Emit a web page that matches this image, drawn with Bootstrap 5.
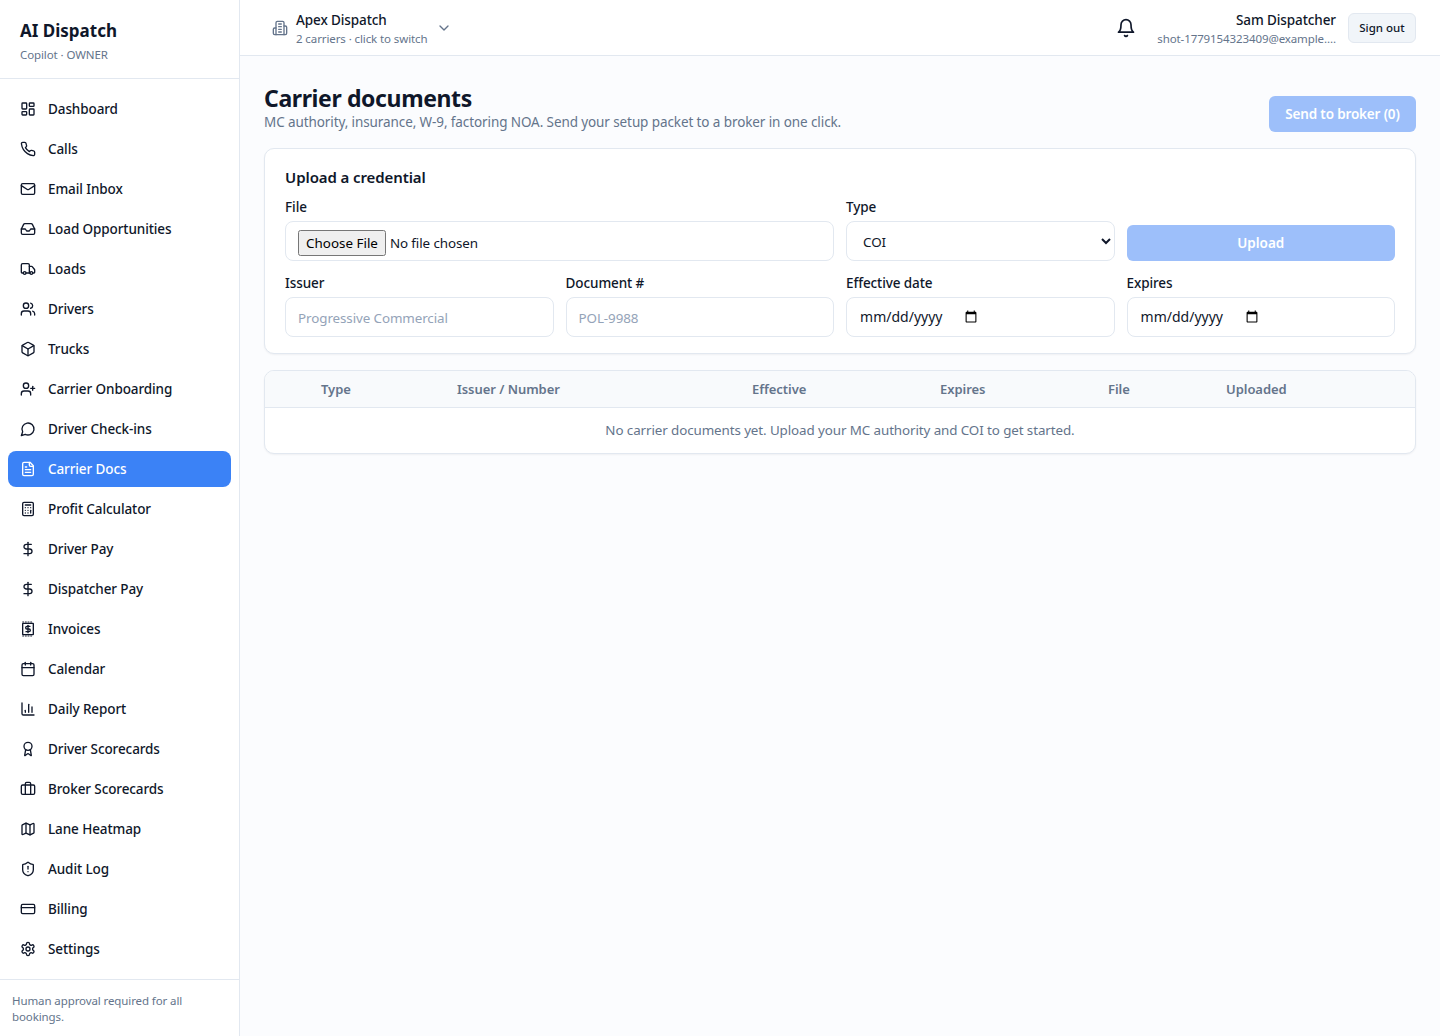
<!doctype html>
<html lang="en"><head><meta charset="utf-8"><title>Carrier documents</title>
<link href="https://cdn.jsdelivr.net/npm/bootstrap@5.3.0/dist/css/bootstrap.min.css" rel="stylesheet">
<style>
body{font-family:"Noto Sans",sans-serif;background:#fbfcfe;color:#0f172a;font-size:13.5px;letter-spacing:-.1px;height:1036px;overflow:hidden}
.app-side{width:240px;height:1036px;background:#fff;border-right:1px solid #e2e8f0;flex:none}
.side-head{height:79px;padding:19px 20px 0;border-bottom:1px solid #e2e8f0;flex:none}
.side-title{font-size:17px;font-weight:700;line-height:24px;letter-spacing:0}
.side-sub{font-size:11.5px;line-height:20px;color:#64748b;margin-top:2px}
.side-nav{padding:12px 8px 0;flex:1 1 auto}
.nav-row{height:36px;margin-bottom:4px;padding:0 12px;border-radius:8px;color:#0f172a;font-size:13.5px;font-weight:500;text-decoration:none;gap:12px}
.nav-row svg,.top-ic{width:16px;height:16px;fill:none;stroke:currentColor;stroke-width:2;stroke-linecap:round;stroke-linejoin:round;flex:none}
.nav-row.on{background:#3b82f6;color:#fff}
.side-foot{border-top:1px solid #e2e8f0;padding:13px 12px 0;height:57px;font-size:11.5px;line-height:16px;color:#64748b;flex:none}
.top-bar{height:56px;background:#fff;border-bottom:1px solid #e2e8f0;padding:0 24px 0 32px}
.org-block{padding-top:2px}
.org-name{font-size:13.5px;font-weight:500;line-height:20px}
.org-sub{font-size:11.5px;line-height:16px;color:#64748b;margin-top:1px}
.top-ic.bell{width:20px;height:20px;margin-right:21px}
.grey-ic{color:#64748b}
.btn-out{font-size:11.5px;font-weight:500;background:#f1f5f9;border:1px solid #e2e8f0;border-radius:6px;padding:0 10px;height:30px;width:68px;color:#0f172a;margin-left:12px}
.main-pad{padding:28px 24px}
.pg-title{font-size:23px;font-weight:700;line-height:28px;margin:0;letter-spacing:-.38px}
.pg-sub{font-size:13.5px;line-height:20px;color:#64748b;margin:0}
.btn-blue{background:#9dbffa;color:#fff;border:0;border-radius:6px;font-size:13.5px;font-weight:600;height:36px}
.btn-send{width:147px;letter-spacing:-.16px;padding:0}
.panel-box{background:#fff;border:1px solid #e2e8f0;border-radius:10px;box-shadow:0 1px 2px rgba(15,23,42,.05)}
.pad-form{padding:16px 19.9px 16px 20.1px}
.panel-h{font-size:15px;font-weight:600;line-height:24px;margin:0 0 8px}
.fld-lbl{font-size:13.5px;font-weight:500;line-height:20px;margin:0 0 4px;display:block}
.fld{height:40px;border:1px solid #e2e8f0;border-radius:8px;background:#fff;font-size:13.4px;color:#0f172a;padding:1px 12px 0;width:100%;font-family:inherit;letter-spacing:-.1px}
.fld::placeholder{color:#94a3b8}
.fld-file{padding:8px 12px 4px;line-height:26px}
.fld-file::file-selector-button{height:26px;line-height:22px;padding:0 6px;margin-right:4px}
.fld[type=date]{font-size:14px;letter-spacing:0;padding:0 12px 1px 13px}
.fld[type=date]::-webkit-datetime-edit{flex:none;margin-right:-6px}
.fld[type=date]::-webkit-calendar-picker-indicator{margin-left:0}
.form-grid{display:grid;grid-template-columns:repeat(4,1fr);gap:12px}
.span-two{grid-column:span 2}
.doc-table{width:100%;table-layout:fixed;border-collapse:separate;border-spacing:0;margin:0}
.doc-table th{background:#f8fafc;border-bottom:1px solid #e2e8f0;height:37px;font-weight:600;color:#64748b;font-size:13px;letter-spacing:-.05px;padding:1px 16px 0}
.doc-table th:first-child{border-top-left-radius:9px}
.doc-table th:last-child{border-top-right-radius:9px}
.doc-table td{height:45px;color:#64748b;font-size:13.4px;text-align:center;padding:0}
.c0{width:40px}.c1{width:136px}.c2{width:295px}.c3{width:188px}.c4{width:168px}.c5{width:118px}
</style></head>
<body>
<svg class="d-none"><defs>
<symbol id="i-dash" viewBox="0 0 24 24"><rect x="3" y="3" width="7" height="9" rx="1"/><rect x="14" y="3" width="7" height="5" rx="1"/><rect x="14" y="12" width="7" height="9" rx="1"/><rect x="3" y="16" width="7" height="5" rx="1"/></symbol>
<symbol id="i-phone" viewBox="0 0 24 24"><path d="M22 16.92v3a2 2 0 0 1-2.18 2 19.79 19.79 0 0 1-8.63-3.07 19.5 19.5 0 0 1-6-6 19.79 19.79 0 0 1-3.07-8.67A2 2 0 0 1 4.11 2h3a2 2 0 0 1 2 1.72 12.84 12.84 0 0 0 .7 2.81 2 2 0 0 1-.45 2.11L8.09 9.91a16 16 0 0 0 6 6l1.27-1.27a2 2 0 0 1 2.11-.45 12.84 12.84 0 0 0 2.81.7A2 2 0 0 1 22 16.92z"/></symbol>
<symbol id="i-mail" viewBox="0 0 24 24"><rect width="20" height="16" x="2" y="4" rx="2"/><path d="m22 7-8.97 5.7a1.94 1.94 0 0 1-2.06 0L2 7"/></symbol>
<symbol id="i-inbox" viewBox="0 0 24 24"><polyline points="22 12 16 12 14 15 10 15 8 12 2 12"/><path d="M5.45 5.11 2 12v6a2 2 0 0 0 2 2h16a2 2 0 0 0 2-2v-6l-3.45-6.89A2 2 0 0 0 16.76 4H7.24a2 2 0 0 0-1.79 1.11z"/></symbol>
<symbol id="i-truck" viewBox="0 0 24 24"><path d="M14 18V6a2 2 0 0 0-2-2H4a2 2 0 0 0-2 2v11a1 1 0 0 0 1 1h2"/><path d="M15 18H9"/><path d="M19 18h2a1 1 0 0 0 1-1v-3.65a1 1 0 0 0-.22-.624l-3.48-4.35A1 1 0 0 0 17.52 8H14"/><circle cx="17" cy="18" r="2"/><circle cx="7" cy="18" r="2"/></symbol>
<symbol id="i-users" viewBox="0 0 24 24"><path d="M16 21v-2a4 4 0 0 0-4-4H6a4 4 0 0 0-4 4v2"/><circle cx="9" cy="7" r="4"/><path d="M22 21v-2a4 4 0 0 0-3-3.87"/><path d="M16 3.13a4 4 0 0 1 0 7.75"/></symbol>
<symbol id="i-box" viewBox="0 0 24 24"><path d="M21 8a2 2 0 0 0-1-1.73l-7-4a2 2 0 0 0-2 0l-7 4A2 2 0 0 0 3 8v8a2 2 0 0 0 1 1.73l7 4a2 2 0 0 0 2 0l7-4A2 2 0 0 0 21 16Z"/><path d="m3.3 7 8.7 5 8.7-5"/><path d="M12 22V12"/></symbol>
<symbol id="i-uplus" viewBox="0 0 24 24"><path d="M16 21v-2a4 4 0 0 0-4-4H6a4 4 0 0 0-4 4v2"/><circle cx="9" cy="7" r="4"/><line x1="19" x2="19" y1="8" y2="14"/><line x1="22" x2="16" y1="11" y2="11"/></symbol>
<symbol id="i-msg" viewBox="0 0 24 24"><path d="M7.9 20A9 9 0 1 0 4 16.1L2 22Z"/></symbol>
<symbol id="i-file" viewBox="0 0 24 24"><path d="M15 2H6a2 2 0 0 0-2 2v16a2 2 0 0 0 2 2h12a2 2 0 0 0 2-2V7Z"/><path d="M14 2v4a2 2 0 0 0 2 2h4"/><path d="M10 9H8"/><path d="M16 13H8"/><path d="M16 17H8"/></symbol>
<symbol id="i-calc" viewBox="0 0 24 24"><rect width="16" height="20" x="4" y="2" rx="2"/><line x1="8" x2="16" y1="6" y2="6"/><line x1="16" x2="16" y1="14" y2="18"/><path d="M16 10h.01"/><path d="M12 10h.01"/><path d="M8 10h.01"/><path d="M12 14h.01"/><path d="M8 14h.01"/><path d="M12 18h.01"/><path d="M8 18h.01"/></symbol>
<symbol id="i-dollar" viewBox="0 0 24 24"><line x1="12" x2="12" y1="2" y2="22"/><path d="M17 5H9.5a3.5 3.5 0 0 0 0 7h5a3.5 3.5 0 0 1 0 7H6"/></symbol>
<symbol id="i-inv" viewBox="0 0 24 24"><rect x="4" y="3.5" width="16" height="17" rx=".5"/><path d="M4 1.5h16M4 22.5h16" stroke-dasharray="1.5 2.5" stroke-width="1.4"/><path d="M15 8h-4.5a2 2 0 0 0 0 4h3a2 2 0 0 1 0 4H9"/><path d="M12 6.5v11"/></symbol>
<symbol id="i-cal" viewBox="0 0 24 24"><path d="M8 2v4"/><path d="M16 2v4"/><rect width="18" height="18" x="3" y="4" rx="2"/><path d="M3 10h18"/></symbol>
<symbol id="i-chart" viewBox="0 0 24 24"><path d="M3 3v16a2 2 0 0 0 2 2h16"/><path d="M18 17V9"/><path d="M13 17V5"/><path d="M8 17v-3"/></symbol>
<symbol id="i-award" viewBox="0 0 24 24"><path d="m15.477 12.89 1.515 8.526a.5.5 0 0 1-.81.47l-3.58-2.687a1 1 0 0 0-1.197 0l-3.586 2.686a.5.5 0 0 1-.81-.469l1.514-8.526"/><circle cx="12" cy="8" r="6"/></symbol>
<symbol id="i-brief" viewBox="0 0 24 24"><path d="M16 20V4a2 2 0 0 0-2-2h-4a2 2 0 0 0-2 2v16"/><rect width="20" height="14" x="2" y="6" rx="2"/></symbol>
<symbol id="i-map" viewBox="0 0 24 24"><path d="M14.106 5.553a2 2 0 0 0 1.788 0l3.659-1.83A1 1 0 0 1 21 4.619v12.764a1 1 0 0 1-.553.894l-4.553 2.277a2 2 0 0 1-1.788 0l-4.212-2.106a2 2 0 0 0-1.788 0l-3.659 1.83A1 1 0 0 1 3 19.381V6.618a1 1 0 0 1 .553-.894l4.553-2.277a2 2 0 0 1 1.788 0z"/><path d="M15 5.764v15"/><path d="M9 3.236v15"/></symbol>
<symbol id="i-shield" viewBox="0 0 24 24"><path d="M20 13c0 5-3.5 7.5-7.66 8.95a1 1 0 0 1-.67-.01C7.5 20.5 4 18 4 13V6a1 1 0 0 1 1-1c2 0 4.5-1.2 6.24-2.72a1.17 1.17 0 0 1 1.52 0C14.51 3.81 17 5 19 5a1 1 0 0 1 1 1z"/><path d="M12 8v4"/><path d="M12 16h.01"/></symbol>
<symbol id="i-card" viewBox="0 0 24 24"><rect width="20" height="14" x="2" y="5" rx="2"/><line x1="2" x2="22" y1="10" y2="10"/></symbol>
<symbol id="i-gear" viewBox="0 0 24 24"><path d="M12.22 2h-.44a2 2 0 0 0-2 2v.18a2 2 0 0 1-1 1.73l-.43.25a2 2 0 0 1-2 0l-.15-.08a2 2 0 0 0-2.73.73l-.22.38a2 2 0 0 0 .73 2.73l.15.1a2 2 0 0 1 1 1.72v.51a2 2 0 0 1-1 1.74l-.15.09a2 2 0 0 0-.73 2.73l.22.38a2 2 0 0 0 2.73.73l.15-.08a2 2 0 0 1 2 0l.43.25a2 2 0 0 1 1 1.73V20a2 2 0 0 0 2 2h.44a2 2 0 0 0 2-2v-.18a2 2 0 0 1 1-1.73l.43-.25a2 2 0 0 1 2 0l.15.08a2 2 0 0 0 2.73-.73l.22-.39a2 2 0 0 0-.73-2.73l-.15-.08a2 2 0 0 1-1-1.74v-.5a2 2 0 0 1 1-1.74l.15-.09a2 2 0 0 0 .73-2.73l-.22-.38a2 2 0 0 0-2.73-.73l-.15.08a2 2 0 0 1-2 0l-.43-.25a2 2 0 0 1-1-1.73V4a2 2 0 0 0-2-2z"/><circle cx="12" cy="12" r="3"/></symbol>
</defs></svg>
<div class="d-flex">
<aside class="app-side d-flex flex-column">
<div class="side-head"><div class="side-title">AI Dispatch</div><div class="side-sub">Copilot · OWNER</div></div>
<nav class="side-nav">
<a class="nav-row d-flex align-items-center" href="#"><svg><use href="#i-dash"/></svg>Dashboard</a>
<a class="nav-row d-flex align-items-center" href="#"><svg><use href="#i-phone"/></svg>Calls</a>
<a class="nav-row d-flex align-items-center" href="#"><svg><use href="#i-mail"/></svg>Email Inbox</a>
<a class="nav-row d-flex align-items-center" href="#"><svg><use href="#i-inbox"/></svg>Load Opportunities</a>
<a class="nav-row d-flex align-items-center" href="#"><svg><use href="#i-truck"/></svg>Loads</a>
<a class="nav-row d-flex align-items-center" href="#"><svg><use href="#i-users"/></svg>Drivers</a>
<a class="nav-row d-flex align-items-center" href="#"><svg><use href="#i-box"/></svg>Trucks</a>
<a class="nav-row d-flex align-items-center" href="#"><svg><use href="#i-uplus"/></svg>Carrier Onboarding</a>
<a class="nav-row d-flex align-items-center" href="#"><svg><use href="#i-msg"/></svg>Driver Check-ins</a>
<a class="nav-row on d-flex align-items-center" href="#"><svg><use href="#i-file"/></svg>Carrier Docs</a>
<a class="nav-row d-flex align-items-center" href="#"><svg><use href="#i-calc"/></svg>Profit Calculator</a>
<a class="nav-row d-flex align-items-center" href="#"><svg><use href="#i-dollar"/></svg>Driver Pay</a>
<a class="nav-row d-flex align-items-center" href="#"><svg><use href="#i-dollar"/></svg>Dispatcher Pay</a>
<a class="nav-row d-flex align-items-center" href="#"><svg><use href="#i-inv"/></svg>Invoices</a>
<a class="nav-row d-flex align-items-center" href="#"><svg><use href="#i-cal"/></svg>Calendar</a>
<a class="nav-row d-flex align-items-center" href="#"><svg><use href="#i-chart"/></svg>Daily Report</a>
<a class="nav-row d-flex align-items-center" href="#"><svg><use href="#i-award"/></svg>Driver Scorecards</a>
<a class="nav-row d-flex align-items-center" href="#"><svg><use href="#i-brief"/></svg>Broker Scorecards</a>
<a class="nav-row d-flex align-items-center" href="#"><svg><use href="#i-map"/></svg>Lane Heatmap</a>
<a class="nav-row d-flex align-items-center" href="#"><svg><use href="#i-shield"/></svg>Audit Log</a>
<a class="nav-row d-flex align-items-center" href="#"><svg><use href="#i-card"/></svg>Billing</a>
<a class="nav-row d-flex align-items-center" href="#"><svg><use href="#i-gear"/></svg>Settings</a>
</nav>
<div class="side-foot">Human approval required for all bookings.</div>
</aside>
<div class="flex-grow-1">
<header class="top-bar d-flex align-items-center justify-content-between">
<div class="d-flex align-items-center">
<svg class="top-ic grey-ic me-2" viewBox="0 0 24 24"><path d="M6 22V4a2 2 0 0 1 2-2h8a2 2 0 0 1 2 2v18Z"/><path d="M6 12H4a2 2 0 0 0-2 2v6a2 2 0 0 0 2 2h2"/><path d="M18 9h2a2 2 0 0 1 2 2v9a2 2 0 0 1-2 2h-2"/><path d="M10 6h4"/><path d="M10 10h4"/><path d="M10 14h4"/><path d="M10 18h4"/></svg>
<div class="org-block"><div class="org-name">Apex Dispatch</div><div class="org-sub">2 carriers · click to switch</div></div>
<svg class="top-ic grey-ic ms-2" viewBox="0 0 24 24"><path d="m6 9 6 6 6-6"/></svg>
</div>
<div class="d-flex align-items-center">
<svg class="top-ic bell" viewBox="0 0 24 24"><path d="M6 8a6 6 0 0 1 12 0c0 7 3 9 3 9H3s3-2 3-9"/><path d="M10.3 21a1.94 1.94 0 0 0 3.4 0"/></svg>
<div class="text-end org-block"><div class="org-name">Sam Dispatcher</div><div class="org-sub">shot-1779154323409@example....</div></div>
<button class="btn-out">Sign out</button>
</div>
</header>
<main class="main-pad">
<div class="d-flex justify-content-between align-items-end mb-3">
<div><h1 class="pg-title">Carrier documents</h1><p class="pg-sub">MC authority, insurance, W-9, factoring NOA. Send your setup packet to a broker in one click.</p></div>
<button class="btn-blue btn-send">Send to broker (0)</button>
</div>
<section class="panel-box pad-form mb-3">
<h2 class="panel-h">Upload a credential</h2>
<div class="form-grid">
<div class="span-two"><label class="fld-lbl">File</label><input class="fld fld-file" type="file"></div>
<div><label class="fld-lbl">Type</label><select class="fld"><option>COI</option></select></div>
<div class="d-flex align-items-end"><button class="btn-blue w-100">Upload</button></div>
<div><label class="fld-lbl">Issuer</label><input class="fld" placeholder="Progressive Commercial"></div>
<div><label class="fld-lbl">Document #</label><input class="fld" placeholder="POL-9988"></div>
<div><label class="fld-lbl">Effective date</label><input class="fld" type="date"></div>
<div><label class="fld-lbl">Expires</label><input class="fld" type="date"></div>
</div>
</section>
<section class="panel-box">
<table class="doc-table">
<colgroup><col class="c0"><col class="c1"><col class="c2"><col class="c3"><col class="c4"><col class="c5"><col></colgroup>
<thead><tr><th></th><th>Type</th><th>Issuer / Number</th><th>Effective</th><th>Expires</th><th>File</th><th>Uploaded</th></tr></thead>
<tbody><tr><td colspan="7">No carrier documents yet. Upload your MC authority and COI to get started.</td></tr></tbody>
</table>
</section>
</main>
</div>
</div>
</body></html>
